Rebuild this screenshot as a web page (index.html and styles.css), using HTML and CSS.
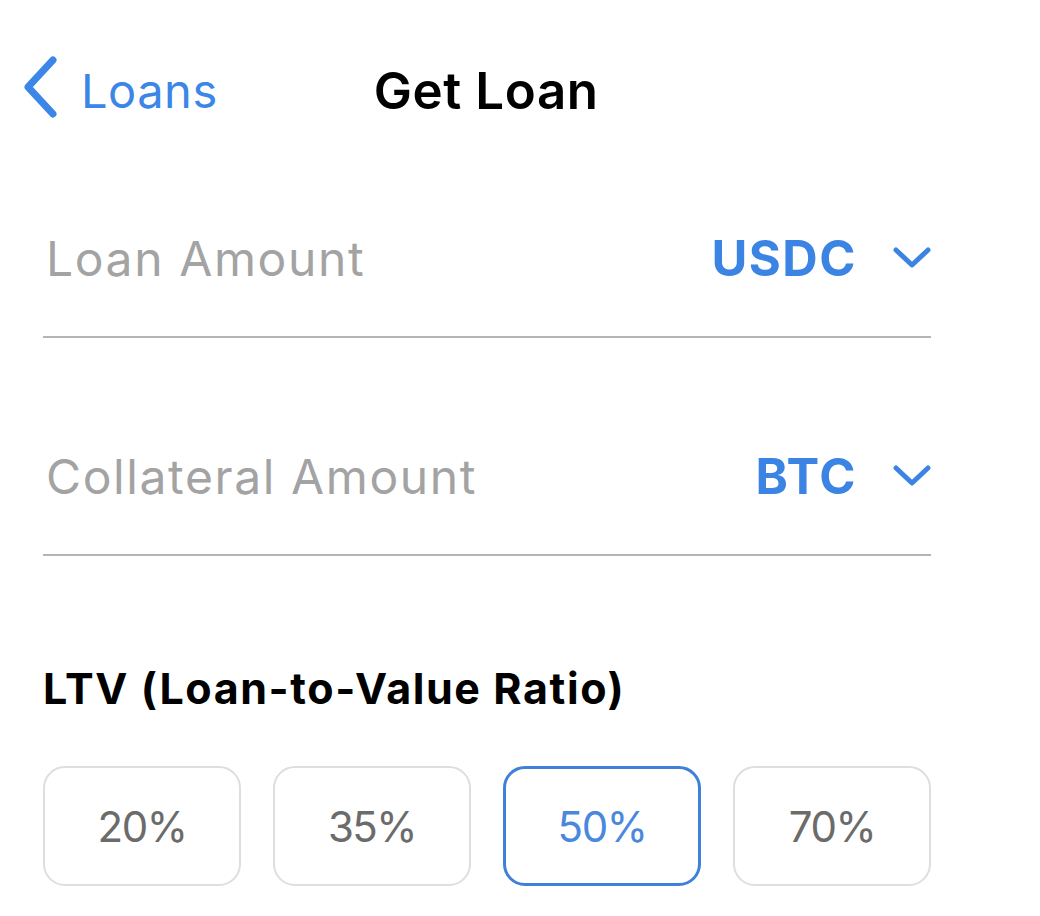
FILE: index.html
```html
<!DOCTYPE html>
<html lang="en">
<head>
<meta charset="utf-8">
<title>Get Loan</title>
<link rel="stylesheet" href="styles.css">
</head>
<body>
<div class="screen">
  <header class="nav">
    <a class="back" href="#">
      <svg class="back-icon" viewBox="0 0 36 62" width="36" height="62" aria-hidden="true">
        <path d="M31 4 L6 31 L31 58" fill="none" stroke="currentColor" stroke-width="7" stroke-linecap="round" stroke-linejoin="round"/>
      </svg>
      <span class="back-label">Loans</span>
    </a>
    <h1 class="title">Get Loan</h1>
  </header>

  <main class="form">
    <div class="field">
      <span class="placeholder">Loan Amount</span>
      <button class="currency" type="button">
        <span>USDC</span>
        <svg class="caret" viewBox="0 0 38 22" width="38" height="22" aria-hidden="true">
          <path d="M3 3 L19 18 L35 3" fill="none" stroke="currentColor" stroke-width="5" stroke-linecap="round" stroke-linejoin="round"/>
        </svg>
      </button>
    </div>

    <div class="field field-second">
      <span class="placeholder">Collateral Amount</span>
      <button class="currency" type="button">
        <span>BTC</span>
        <svg class="caret" viewBox="0 0 38 22" width="38" height="22" aria-hidden="true">
          <path d="M3 3 L19 18 L35 3" fill="none" stroke="currentColor" stroke-width="5" stroke-linecap="round" stroke-linejoin="round"/>
        </svg>
      </button>
    </div>

    <h2 class="section-title">LTV (Loan-to-Value Ratio)</h2>

    <div class="options">
      <button class="option" type="button">20%</button>
      <button class="option" type="button">35%</button>
      <button class="option selected" type="button">50%</button>
      <button class="option" type="button">70%</button>
    </div>
  </main>
</div>
</body>
</html>
```

FILE: styles.css
```css
* { box-sizing: border-box; }

html, body {
  margin: 0;
  padding: 0;
  background: #ffffff;
}

body {
  font-family: Inter, "Liberation Sans", Arial, sans-serif;
  color: #000;
  -webkit-font-smoothing: antialiased;
}

.screen {
  width: 1040px;
  height: 916px;
  overflow: hidden;
}

.nav {
  height: 180px;
  display: flex;
  align-items: center;
  padding-left: 22px;
}

.back {
  display: flex;
  align-items: center;
  gap: 23px;
  color: #3b86e6;
  text-decoration: none;
}

.back-icon {
  display: block;
  margin-top: -6px;
}

.back-label {
  font-size: 47px;
  font-weight: 400;
  letter-spacing: 0.5px;
}

.title {
  margin: 0 0 0 156px;
  font-size: 51px;
  font-weight: 600;
  letter-spacing: 0.6px;
}

.form {
  padding: 0 109px 0 43px;
}

.field {
  height: 158px;
  display: flex;
  align-items: center;
  justify-content: space-between;
  border-bottom: 2px solid #b5b5b5;
}

.field-second {
  margin-top: 60px;
}

.placeholder {
  font-size: 48px;
  color: #a3a3a3;
  letter-spacing: 1.6px;
  padding-left: 3px;
}

.currency {
  display: flex;
  align-items: center;
  gap: 36px;
  border: 0;
  background: none;
  padding: 0;
  font-family: inherit;
  font-size: 49px;
  font-weight: 700;
  color: #3b84e3;
  letter-spacing: 1.5px;
}

.caret {
  display: block;
  margin-top: 0;
}

.section-title {
  margin: 107px 0 0;
  font-size: 43px;
  line-height: 50px;
  font-weight: 700;
  letter-spacing: 1.6px;
}

.options {
  margin-top: 53px;
  display: grid;
  grid-template-columns: repeat(4, 1fr);
  gap: 32px;
}

.option {
  height: 120px;
  border: 2.5px solid #dedede;
  border-radius: 22px;
  background: #fff;
  font-family: inherit;
  font-size: 42px;
  color: #6b6b6b;
  letter-spacing: -1.5px;
  padding: 0;
}

.option.selected {
  border: 3px solid #3f80d8;
  color: #4a88dd;
}
```
